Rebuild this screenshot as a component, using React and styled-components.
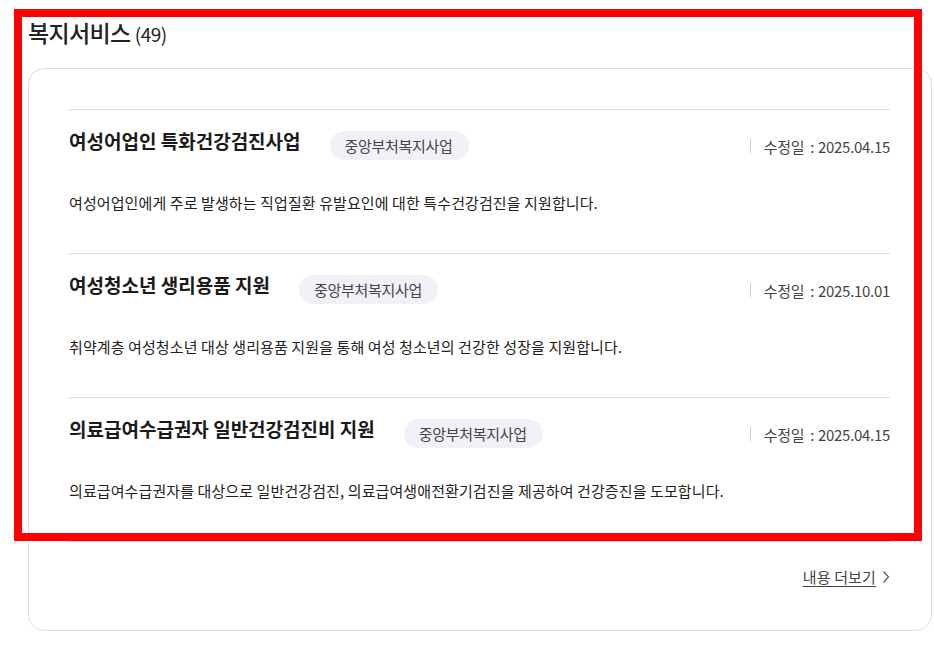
import React from 'react'
import styled, { createGlobalStyle } from 'styled-components'

const GlobalStyle = createGlobalStyle`
  html, body {
    margin: 0;
    padding: 0;
    background: #fff;
  }
  body {
    font-family: 'Noto Sans CJK KR', 'Noto Sans', sans-serif;
    color: #222;
  }
`

const services = [
  {
    title: '여성어업인 특화건강검진사업',
    tag: '중앙부처복지사업',
    date: '2025.04.15',
    desc: '여성어업인에게 주로 발생하는 직업질환 유발요인에 대한 특수건강검진을 지원합니다.'
  },
  {
    title: '여성청소년 생리용품 지원',
    tag: '중앙부처복지사업',
    date: '2025.10.01',
    desc: '취약계층 여성청소년 대상 생리용품 지원을 통해 여성 청소년의 건강한 성장을 지원합니다.'
  },
  {
    title: '의료급여수급권자 일반건강검진비 지원',
    tag: '중앙부처복지사업',
    date: '2025.04.15',
    desc: '의료급여수급권자를 대상으로 일반건강검진, 의료급여생애전환기검진을 제공하여 건강증진을 도모합니다.'
  }
]

const App = () => {
  return (
    <>
      <GlobalStyle />
      <Page>
        <Heading>
          복지서비스 <Count>(49)</Count>
        </Heading>
        <Card>
          <List>
            {services.map((s, i) => (
              <Item key={i}>
                <Row>
                  <Title>{s.title}</Title>
                  <Tag>{s.tag}</Tag>
                  <Updated>
                    수정일 <Colon>:</Colon>{s.date}
                  </Updated>
                </Row>
                <Desc>{s.desc}</Desc>
              </Item>
            ))}
          </List>
          <More href='#'>
            <span>내용 더보기</span>
            <Chevron viewBox='0 0 8 14' aria-hidden='true'>
              <path d='M1.5 1.5 L6.5 7 L1.5 12.5' fill='none' stroke='#555' strokeWidth='1.2' />
            </Chevron>
          </More>
        </Card>
        <Highlight />
      </Page>
    </>
  )
}

const Page = styled.div`
  position: relative;
  padding: 17px 2px 19px 28px;
`

const Heading = styled.h2`
  margin: 0;
  font-size: 23px;
  font-weight: 500;
  line-height: 30px;
  letter-spacing: -0.03em;
  color: #222;
`

const Count = styled.span`
  font-size: 19px;
  font-weight: 400;
  letter-spacing: -0.03em;
`

const Card = styled.div`
  margin-top: 19px;
  border: 1px solid #dedede;
  border-radius: 16px;
  padding: 40px 41px 43px 40px;
  display: flex;
  flex-direction: column;
`

const List = styled.ul`
  list-style: none;
  margin: 0;
  padding: 0;
  border-bottom: 1px solid #dedede;
`

const Item = styled.li`
  border-top: 1px solid #dedede;
  padding: 21px 0 39px;
`

const Row = styled.div`
  display: flex;
  align-items: center;
  height: 29px;
`

const Title = styled.strong`
  font-size: 19px;
  font-weight: 700;
  letter-spacing: 0;
  color: #1a1a1a;
  margin-top: -10px;
`

const Tag = styled.span`
  margin-left: 29px;
  display: inline-flex;
  align-items: center;
  height: 29px;
  padding: 0 16px 0 15px;
  border-radius: 15px;
  background: #f2f1f9;
  font-size: 15px;
  letter-spacing: -0.02em;
  color: #444;
`

const Updated = styled.span`
  margin-left: auto;
  display: flex;
  align-items: center;
  font-size: 15px;
  letter-spacing: -0.02em;
  color: #444;
  margin-top: 1px;

  &::before {
    content: '';
    width: 1px;
    height: 14px;
    background: #ccc;
    margin-right: 13px;
  }
`

const Colon = styled.span`
  margin: 0 4px 0 6px;
`

const Desc = styled.p`
  margin: 32px 0 0;
  font-size: 15px;
  letter-spacing: 0.1px;
  line-height: 22px;
  color: #222;
`

const More = styled.a`
  align-self: flex-end;
  margin-top: 24px;
  display: inline-flex;
  align-items: center;
  gap: 6px;
  font-size: 15px;
  letter-spacing: 0.01em;
  color: #444;
  text-decoration: none;

  span {
    text-decoration: underline;
    text-underline-offset: 3px;
  }
`

const Chevron = styled.svg`
  width: 8px;
  height: 14px;
`

const Highlight = styled.div`
  position: absolute;
  left: 14px;
  top: 9px;
  width: 908px;
  height: 532px;
  box-sizing: border-box;
  border: 8px solid #ff0000;
  pointer-events: none;
`

export default App
